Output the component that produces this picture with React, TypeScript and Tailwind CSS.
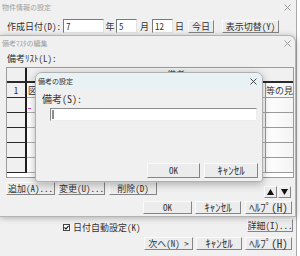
const jp = "font-['Noto_Sans_Mono_CJK_JP','Noto_Sans_CJK_JP',sans-serif]";

function CloseX({ dark = false }: { dark?: boolean }) {
  return (
    <svg width="7" height="7" viewBox="0 0 7 7" className="shrink-0">
      <path d="M0.5 0.5L6.5 6.5M6.5 0.5L0.5 6.5" stroke={dark ? "#444" : "#9a9a9a"} strokeWidth="1" />
    </svg>
  );
}

function Btn({ label, className = "", size = "text-[9px]" }: { label: string; className?: string; size?: string }) {
  return (
    <div
      className={`h-[13px] shrink-0 flex items-center justify-center bg-[#ececec] border border-t-[#fafafa] border-l-[#fafafa] border-b-[#858585] border-r-[#858585] leading-none text-[#333] whitespace-nowrap ${size} ${className}`}
    >
      {label}
    </div>
  );
}

function Field({ value = "", className = "" }: { value?: string; className?: string }) {
  return (
    <div
      className={`h-[14px] shrink-0 flex items-center bg-white border border-t-[#7a7a7a] border-l-[#7a7a7a] border-b-[#e3e3e3] border-r-[#e3e3e3] pl-[2px] text-[9px] leading-none text-[#333] ${className}`}
    >
      {value}
    </div>
  );
}

const kana = "text-[11px]";
const rows = [1, 2, 3, 4, 5, 6];

export default function App() {
  return (
    <div className={`relative w-[300px] h-[256px] overflow-hidden bg-white ${jp}`}>
      {/* ── 物件情報の設定 (back window) ── */}
      <div className="absolute left-0 top-0 w-[297px] h-[280px] bg-[#f0f0f0] border-r border-[#a8a8a8] flex flex-col">
        <div className="h-[14px] flex items-center pl-[2px] pr-[4px]">
          <span className="text-[7px] leading-none text-[#a0a0a0]">物件情報の設定</span>
          <div className="ml-auto mr-[1px]">
            <CloseX />
          </div>
        </div>

        <div className="mt-[5px] h-[14px] flex items-center pl-[7px] text-[9px] text-[#333]">
          <span className="w-[56px] shrink-0 leading-none">作成日付(D):</span>
          <Field value="7" className="w-[41px]" />
          <span className="w-[12px] text-center leading-none">年</span>
          <Field value="5" className="w-[21px]" />
          <span className="w-[15px] text-center leading-none">月</span>
          <Field value="12" className="w-[21px]" />
          <span className="w-[13px] text-center leading-none">日</span>
          <Btn label="今日" className="ml-[2px] mt-[1px] w-[26px]" />
          <Btn label="表示切替(Y)" className="ml-[8px] mt-[1px] w-[57px]" />
        </div>

        <div className="mt-[186px] h-[13px] flex items-center">
          <div className="ml-[63px] flex items-center gap-[3px] mt-[3px]">
            <div className="w-[7px] h-[7px] bg-white border border-[#444] flex items-center justify-center">
              <svg width="5" height="5" viewBox="0 0 5 5">
                <path d="M0.5 2.5L2 4L4.5 0.8" stroke="#111" strokeWidth="1.1" fill="none" />
              </svg>
            </div>
            <span className="text-[9px] leading-none text-[#333]">日付自動設定(K)</span>
          </div>
          <Btn label="詳細(I)..." className="ml-auto mr-[3px] w-[46px]" />
        </div>

        <div className="mt-[5px] flex justify-end gap-[3px] pr-[4px]">
          <Btn label="次へ(N) >" className="w-[49px]" />
          <Btn label="ｷｬﾝｾﾙ" size={kana} className="w-[46px]" />
          <Btn label="ﾍﾙﾌﾟ(H)" size={kana} className="w-[47px]" />
        </div>
      </div>

      {/* ── 備考ﾏｽﾀの編集 ── */}
      <div className="absolute left-0 top-[35px] w-[296px] h-[182px] bg-[#f0f0f0] border-t border-r border-b border-[#b4b4b4] rounded-tr-[7px] shadow-[0_1px_6px_rgba(0,0,0,0.28)] flex flex-col">
        <div className="h-[15px] shrink-0 flex items-center pl-[2px] pr-[4px]">
          <span className="text-[7px] leading-none text-[#a0a0a0]">備考ﾏｽﾀの編集</span>
          <div className="ml-auto">
            <CloseX />
          </div>
        </div>

        <div className="mt-[1px] h-[12px] pl-[7px] flex items-center text-[9px] leading-none text-[#333]">
          備考ﾘｽﾄ(L):
        </div>

        {/* grid */}
        <div className="ml-[6px] mt-[3px] w-[288px] h-[111px] shrink-0 border border-[#9c9c9c] bg-white flex flex-col overflow-hidden">
          <div className="h-[15px] shrink-0 flex border-b-2 border-[#2a2a2a] bg-[#f0f0f0]">
            <div className="w-[20px] shrink-0 border-r-2 border-[#1e1e1e]" />
            <div className="flex-1 flex justify-center pt-[2px] text-[9px] leading-none text-[#333]">
              <span className="ml-[32px]">備考</span>
            </div>
          </div>
          {rows.map((r) => (
            <div key={r} className="h-[15px] shrink-0 flex">
              <div className="w-[20px] shrink-0 bg-[#f0f0f0] border-b border-r-2 border-b-[#2a2a2a] border-r-[#1e1e1e] flex items-center justify-center text-[9px] leading-none text-[#333]">
                {r === 1 ? "1" : ""}
              </div>
              <div className="flex-1 border-b border-[#b0b0b0] flex items-center pl-[1px] text-[9px] leading-none text-[#333]">
                {r === 1 ? "図" : ""}
                {r === 2 ? <span className="mt-[6px] w-[3px] h-px bg-[#d040d0]" /> : null}
              </div>
              <div className="w-[28px] shrink-0 border-l border-b border-[#9a9a9a] bg-gradient-to-r from-white to-[#f4f4f4] flex items-center text-[9px] leading-none text-[#333] overflow-hidden whitespace-nowrap">
                {r === 1 ? "等の見" : ""}
              </div>
            </div>
          ))}
        </div>

        <div className="mt-[4px] h-[16px] flex items-start">
          <Btn label="追加(A)..." className="ml-[6px] w-[49px]" />
          <Btn label="変更(U)..." className="ml-[3px] w-[47px]" />
          <Btn label="削除(D)" className="ml-[4px] w-[48px]" />
          <div className="ml-auto mr-[4px] mt-[4px] flex gap-[1px]">
            <div className="w-[13px] h-[12px] bg-[#ececec] border border-t-[#fafafa] border-l-[#fafafa] border-b-[#858585] border-r-[#858585] flex items-center justify-center">
              <svg width="7" height="6" viewBox="0 0 7 6">
                <path d="M3.5 0L7 6H0Z" fill="#111" />
              </svg>
            </div>
            <div className="w-[13px] h-[12px] bg-[#ececec] border border-t-[#fafafa] border-l-[#fafafa] border-b-[#858585] border-r-[#858585] flex items-center justify-center">
              <svg width="7" height="6" viewBox="0 0 7 6">
                <path d="M0 0H7L3.5 6Z" fill="#111" />
              </svg>
            </div>
          </div>
        </div>

        <div className="mt-[3px] flex justify-end gap-[3px] pr-[3px]">
          <Btn label="OK" className="w-[49px]" />
          <Btn label="ｷｬﾝｾﾙ" size={kana} className="w-[46px]" />
          <Btn label="ﾍﾙﾌﾟ(H)" size={kana} className="w-[47px] ml-[1px]" />
        </div>
      </div>

      {/* ── 備考の設定 (active dialog) ── */}
      <div className="absolute left-[35px] top-[72px] w-[228px] h-[110px] bg-[#f0f0f0] border border-[#b0b0b0] rounded-t-[7px] rounded-b-[3px] shadow-[0_2px_8px_rgba(0,0,0,0.3)] flex flex-col overflow-hidden">
        <div className="h-[16px] shrink-0 bg-[#e8f2f4] flex items-center pl-[2px] pr-[5px]">
          <span className="text-[7px] leading-none text-[#333]">備考の設定</span>
          <div className="ml-auto">
            <CloseX dark />
          </div>
        </div>

        <div className="mt-[4px] h-[12px] pl-[6px] flex items-center text-[10px] leading-none text-[#333]">
          備考(S):
        </div>

        <div className="ml-[14px] mt-[3px] w-[207px] h-[13px] bg-white border border-t-[#8a8a8a] border-l-[#8a8a8a] border-b-[#ececec] border-r-[#ececec] flex items-center pl-[1px]">
          <div className="w-[2px] h-[9px] bg-[#8c8c8c]" />
        </div>

        <div className="mt-[42px] flex justify-end gap-[4px] pr-[4px]">
          <Btn label="OK" className="w-[53px] h-[15px]" />
          <Btn label="ｷｬﾝｾﾙ" size={kana} className="w-[54px] h-[15px]" />
        </div>
      </div>
    </div>
  );
}
